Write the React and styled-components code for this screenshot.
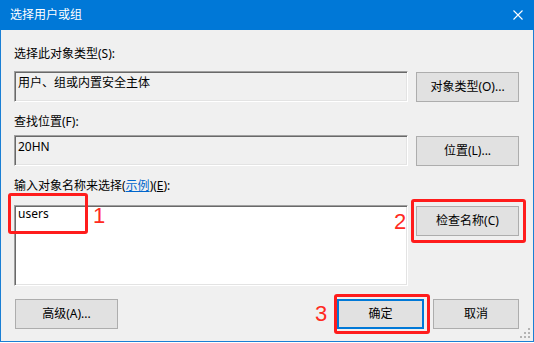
import React from "react";
import styled, { createGlobalStyle } from "styled-components";

const Global = createGlobalStyle`
  html, body { margin: 0; padding: 0; background: #ffffff; }
  body { font-family: "Noto Sans", "Noto Sans CJK SC", sans-serif; font-size: 12px; color: #000; }
`;

const Window = styled.div`
  position: relative;
  width: 534px;
  height: 342px;
  box-sizing: border-box;
  border: 1px solid #1a7fd4;
  border-top: none;
  background: #f0f0f0;
  display: flex;
  flex-direction: column;
`;

const TitleBar = styled.div`
  height: 30px;
  margin: 0 -1px;
  background: #0078d7;
  color: #fff;
  display: flex;
  align-items: center;
  justify-content: space-between;
  padding: 0 11px 0 10px;
  line-height: 16px;
`;

const CloseIcon = styled.svg`
  width: 10px;
  height: 10px;
  display: block;
`;

const Body = styled.div`
  display: flex;
  flex-direction: column;
  padding: 16px 14px 0 13px;
`;

const Label = styled.div`
  line-height: 16px;
  margin-top: ${(p) => p.$mt || 0}px;
  margin-bottom: ${(p) => p.$mb || 0}px;
  white-space: nowrap;
`;

const Link = styled.span`
  color: #0066cc;
  text-decoration: underline;
`;

const Key = styled.span`
  text-decoration: underline;
`;

const Row = styled.div`
  display: grid;
  grid-template-columns: 394px 103px;
  column-gap: 8px;
  align-items: start;
`;

const Field = styled.div`
  box-sizing: border-box;
  height: ${(p) => p.$h}px;
  background: ${(p) => (p.$white ? "#ffffff" : "#f0f0f0")};
  border: 1px solid;
  border-color: #a0a0a0 #ffffff #ffffff #a0a0a0;
  box-shadow: inset 1px 1px 0 #696969, inset -1px -1px 0 #e3e3e3;
  padding: ${(p) => p.$pt}px 3px 0 3px;
  line-height: 16px;
  white-space: nowrap;
`;

const Button = styled.div`
  box-sizing: border-box;
  width: ${(p) => p.$w || 103}px;
  height: 30px;
  margin-top: ${(p) => p.$mt || 0}px;
  margin-left: ${(p) => p.$ml || 0}px;
  background: #e1e1e1;
  border: ${(p) => (p.$primary ? "2px solid #0078d7" : "1px solid #adadad")};
  display: flex;
  align-items: center;
  justify-content: center;
  line-height: 16px;
  white-space: nowrap;
`;

const BottomRow = styled.div`
  display: flex;
  align-items: center;
  margin-top: 13px;
`;

const Spacer = styled.div`
  flex: 1;
`;

const RightButtons = styled.div`
  display: flex;
  gap: 9px;
`;

const Mark = styled.div`
  position: absolute;
  box-sizing: border-box;
  border: 3px solid #ff1c1c;
  border-radius: 3px;
  pointer-events: none;
`;

const Num = styled.div`
  position: absolute;
  font-family: "Liberation Sans", Arial, sans-serif;
  font-size: 22px;
  line-height: 22px;
  color: #ff2a22;
`;

const Grip = styled.svg`
  position: absolute;
  right: 3px;
  bottom: 3px;
  width: 10px;
  height: 10px;
`;

export default function App() {
  const grip = [
    [8, 0],
    [4, 4], [8, 4],
    [0, 8], [4, 8], [8, 8],
  ];
  return (
    <>
      <Global />
      <Window>
        <TitleBar>
          <span>选择用户或组</span>
          <CloseIcon viewBox="0 0 10 10">
            <path d="M0.5 0.5 L9.5 9.5 M9.5 0.5 L0.5 9.5" stroke="#fff" strokeWidth="1.1" fill="none" />
          </CloseIcon>
        </TitleBar>
        <Body>
          <Label $mb={9}>选择此对象类型(S):</Label>
          <Row>
            <Field $h={31} $pt={3}>用户、组或内置安全主体</Field>
            <Button $mt={1}>对象类型(O)...</Button>
          </Row>
          <Label $mt={12} $mb={5}>查找位置(F):</Label>
          <Row>
            <Field $h={31} $pt={3}>20HN</Field>
            <Button $mt={1}>位置(L)...</Button>
          </Row>
          <Label $mt={12} $mb={11}>
            输入对象名称来选择(<Link>示例</Link>)(<Key>E</Key>):
          </Label>
          <Row>
            <Field $h={81} $pt={0} $white>users</Field>
            <Button $mt={1}>检查名称(C)</Button>
          </Row>
          <BottomRow>
            <Button $ml={1}>高级(A)...</Button>
            <Spacer />
            <RightButtons>
              <Button $w={87} $primary>确定</Button>
              <Button $w={86}>取消</Button>
            </RightButtons>
          </BottomRow>
        </Body>
        <Grip viewBox="0 0 10 10">
          {grip.map(([x, y]) => (
            <rect key={`${x}-${y}`} x={x} y={y} width="2" height="2" fill="#b4b4b4" />
          ))}
        </Grip>
        <Mark style={{ left: 7, top: 193, width: 80, height: 41 }} />
        <Num style={{ left: 92, top: 205 }}>1</Num>
        <Mark style={{ left: 410, top: 199, width: 115, height: 44 }} />
        <Num style={{ left: 393, top: 211 }}>2</Num>
        <Mark style={{ left: 333, top: 294, width: 96, height: 40 }} />
        <Num style={{ left: 314, top: 303 }}>3</Num>
      </Window>
    </>
  );
}
